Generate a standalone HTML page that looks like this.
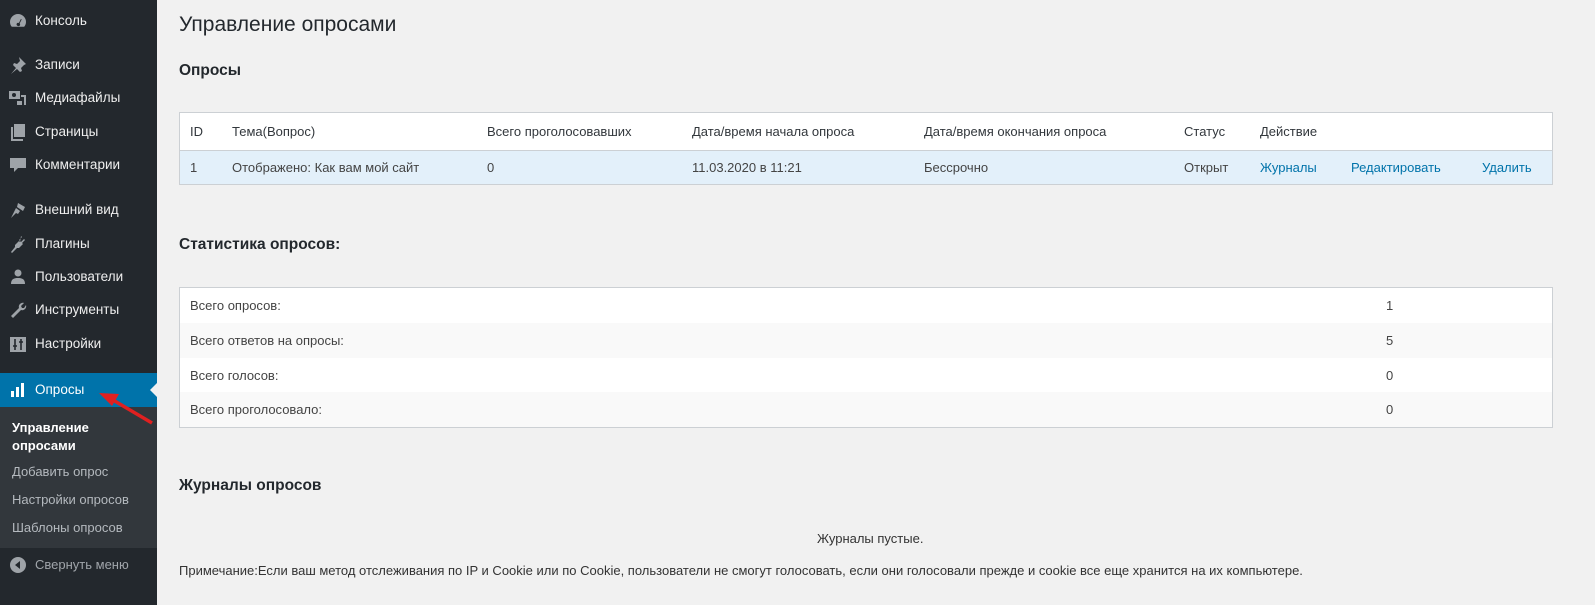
<!DOCTYPE html>
<html><head><meta charset="utf-8"><style>
*{margin:0;padding:0;box-sizing:border-box}
body{width:1595px;height:605px;background:#f1f1f1;font-family:"Liberation Sans","DejaVu Sans",sans-serif;font-size:13px;color:#444;position:relative;overflow:hidden}
#side{position:absolute;left:0;top:0;width:157px;height:605px;background:#23282d}
.mi{position:absolute;left:0;width:157px;height:24px;line-height:24px;color:#eee;font-size:13.5px;padding-left:35px}
.mi svg{position:absolute;left:8px;top:2px}
#act{position:absolute;left:0;top:373px;width:157px;height:34px;background:#0073aa}
#sub{position:absolute;left:0;top:407px;width:157px;height:141px;background:#32373c}
.si{position:absolute;left:12px;color:#b4b9be;font-size:13px}
.abs{position:absolute}
table{border-collapse:collapse;width:100%}
.box{position:absolute;left:179px;width:1374px;border:1px solid #ccd0d4;background:#fff}
td{padding:0 10px;white-space:nowrap}
a{color:#0073aa;text-decoration:none}
h2{position:absolute;left:179px;font-size:15.5px;font-weight:bold;color:#23282d}
</style></head><body>
<div id="side">
<div class="mi" style="top:9px"><svg width="20" height="20" viewBox="0 0 20 20"><path d="M10 3a8 8 0 0 0-8 8c0 2 .7 3.6 1.8 4.8h12.4A8 8 0 0 0 18 11a8 8 0 0 0-8-8zm0 12a1.6 1.6 0 1 1 .9-3l2-4 .8.4-2 4A1.6 1.6 0 0 1 10 15z" fill="#9ea3a8"/></svg>Консоль</div>
<div class="mi" style="top:53px"><svg width="20" height="20" viewBox="0 0 20 20"><path d="M11 2l7 7-2 1-3 3 1 3-2 1-3-3-6 5 5-6-3-3 1-2 3 1 3-3z" fill="#9ea3a8"/></svg>Записи</div>
<div class="mi" style="top:86px"><svg width="20" height="20" viewBox="0 0 20 20"><rect x="1" y="3" width="11" height="8" fill="#9ea3a8"/><circle cx="6" cy="7" r="2" fill="#23282d"/><path d="M13 7h5v10h-2V9h-3z M9 13h5v4H9z" fill="#9ea3a8"/></svg>Медиафайлы</div>
<div class="mi" style="top:120px"><svg width="20" height="20" viewBox="0 0 20 20"><path d="M6 2h11v13H6z M3 5h2v12h10v2H3z" fill="#9ea3a8"/></svg>Страницы</div>
<div class="mi" style="top:153px"><svg width="20" height="20" viewBox="0 0 20 20"><path d="M2 3h16v10h-8l-4 4v-4H2z" fill="#9ea3a8"/></svg>Комментарии</div>
<div class="mi" style="top:198px"><svg width="20" height="20" viewBox="0 0 20 20"><path d="M10 3l7 4-2 4-6-4z M8 8l4 3-2 3-2-1-5 5 3-6z" fill="#9ea3a8"/></svg>Внешний вид</div>
<div class="mi" style="top:232px"><svg width="20" height="20" viewBox="0 0 20 20"><path d="M13 2l1 1-3 3 2 2 3-3 1 1-3 3 1 1-4 4-2 0-5 5-1-1 4-5 0-2 4-4 1 1z" fill="#9ea3a8"/></svg>Плагины</div>
<div class="mi" style="top:265px"><svg width="20" height="20" viewBox="0 0 20 20"><circle cx="10" cy="6" r="3.5" fill="#9ea3a8"/><path d="M3 17c0-5 3-6 7-6s7 1 7 6z" fill="#9ea3a8"/></svg>Пользователи</div>
<div class="mi" style="top:298px"><svg width="20" height="20" viewBox="0 0 20 20"><path d="M16 3l-3 3 1 2 2 0 2-3c1 3-2 6-5 5l-8 8-2-2 8-8c-1-3 2-6 5-5z" fill="#9ea3a8"/></svg>Инструменты</div>
<div class="mi" style="top:332px"><svg width="20" height="20" viewBox="0 0 20 20"><rect x="2" y="3" width="16" height="15" fill="#9ea3a8"/><path d="M7 5v11M13 5v11M5 12h4M11 8h4" stroke="#23282d" stroke-width="1.6"/></svg>Настройки</div>
<div id="act"></div>
<div class="abs" style="left:150px;top:382px;width:0;height:0;border:8px solid transparent;border-right-color:#f1f1f1;border-left:0"></div>
<div class="mi" style="top:378px;color:#fff"><svg width="20" height="20" viewBox="0 0 20 20"><path d="M3 11h3v6H3zM8 7h3v10H8zM13 3h3v14h-3z" fill="#fff"/></svg>Опросы</div>
<div id="sub"></div>
<div class="si" style="top:419px;color:#fff;font-weight:bold;line-height:18px">Управление<br>опросами</div>
<div class="si" style="top:464px">Добавить опрос</div>
<div class="si" style="top:492px">Настройки опросов</div>
<div class="si" style="top:520px">Шаблоны опросов</div>
<div class="mi" style="top:553px;color:#a0a5aa;font-size:13px"><svg width="20" height="20" viewBox="0 0 20 20"><circle cx="10" cy="10" r="8" fill="#9ea3a8"/><path d="M12 6v8l-5-4z" fill="#23282d"/></svg>Свернуть меню</div>
</div>
<svg class="abs" style="left:95px;top:385px" width="65" height="45"><path d="M57 38L18 15" stroke="#e02020" stroke-width="3.5"/><path d="M4 8l20 1-7 12z" fill="#e02020"/></svg>

<div class="abs" style="left:179px;top:13px;font-size:21px;color:#23282d">Управление опросами</div>
<h2 style="top:62px">Опросы</h2>
<div class="box" style="top:112px;height:73px">
<table>
<tr style="height:37px;border-bottom:1px solid #ccd0d4;color:#32373c"><td style="width:42px">ID</td><td style="width:255px">Тема(Вопрос)</td><td style="width:205px">Всего проголосовавших</td><td style="width:232px">Дата/время начала опроса</td><td style="width:260px">Дата/время окончания опроса</td><td style="width:76px">Статус</td><td style="width:91px">Действие</td><td style="width:131px"></td><td></td></tr>
<tr style="height:34px;background:#e3f0fa"><td>1</td><td>Отображено: Как вам мой сайт</td><td>0</td><td>11.03.2020 в 11:21</td><td>Бессрочно</td><td>Открыт</td><td><a>Журналы</a></td><td><a>Редактировать</a></td><td><a>Удалить</a></td></tr>
</table></div>
<h2 style="top:236px">Статистика опросов:</h2>
<div class="box" style="top:287px;height:141px">
<table>
<tr style="height:35px"><td style="width:1196px">Всего опросов:</td><td>1</td></tr>
<tr style="height:35px;background:#f9f9f9"><td>Всего ответов на опросы:</td><td>5</td></tr>
<tr style="height:34px"><td>Всего голосов:</td><td>0</td></tr>
<tr style="height:35px;background:#f9f9f9"><td>Всего проголосовало:</td><td>0</td></tr>
</table></div>
<h2 style="top:477px">Журналы опросов</h2>
<div class="abs" style="left:817px;top:531px;color:#333">Журналы пустые.</div>
<div class="abs" style="left:179px;top:563px;color:#333">Примечание:Если ваш метод отслеживания по IP и Cookie или по Cookie, пользователи не смогут голосовать, если они голосовали прежде и cookie все еще хранится на их компьютере.</div>
</body></html>
